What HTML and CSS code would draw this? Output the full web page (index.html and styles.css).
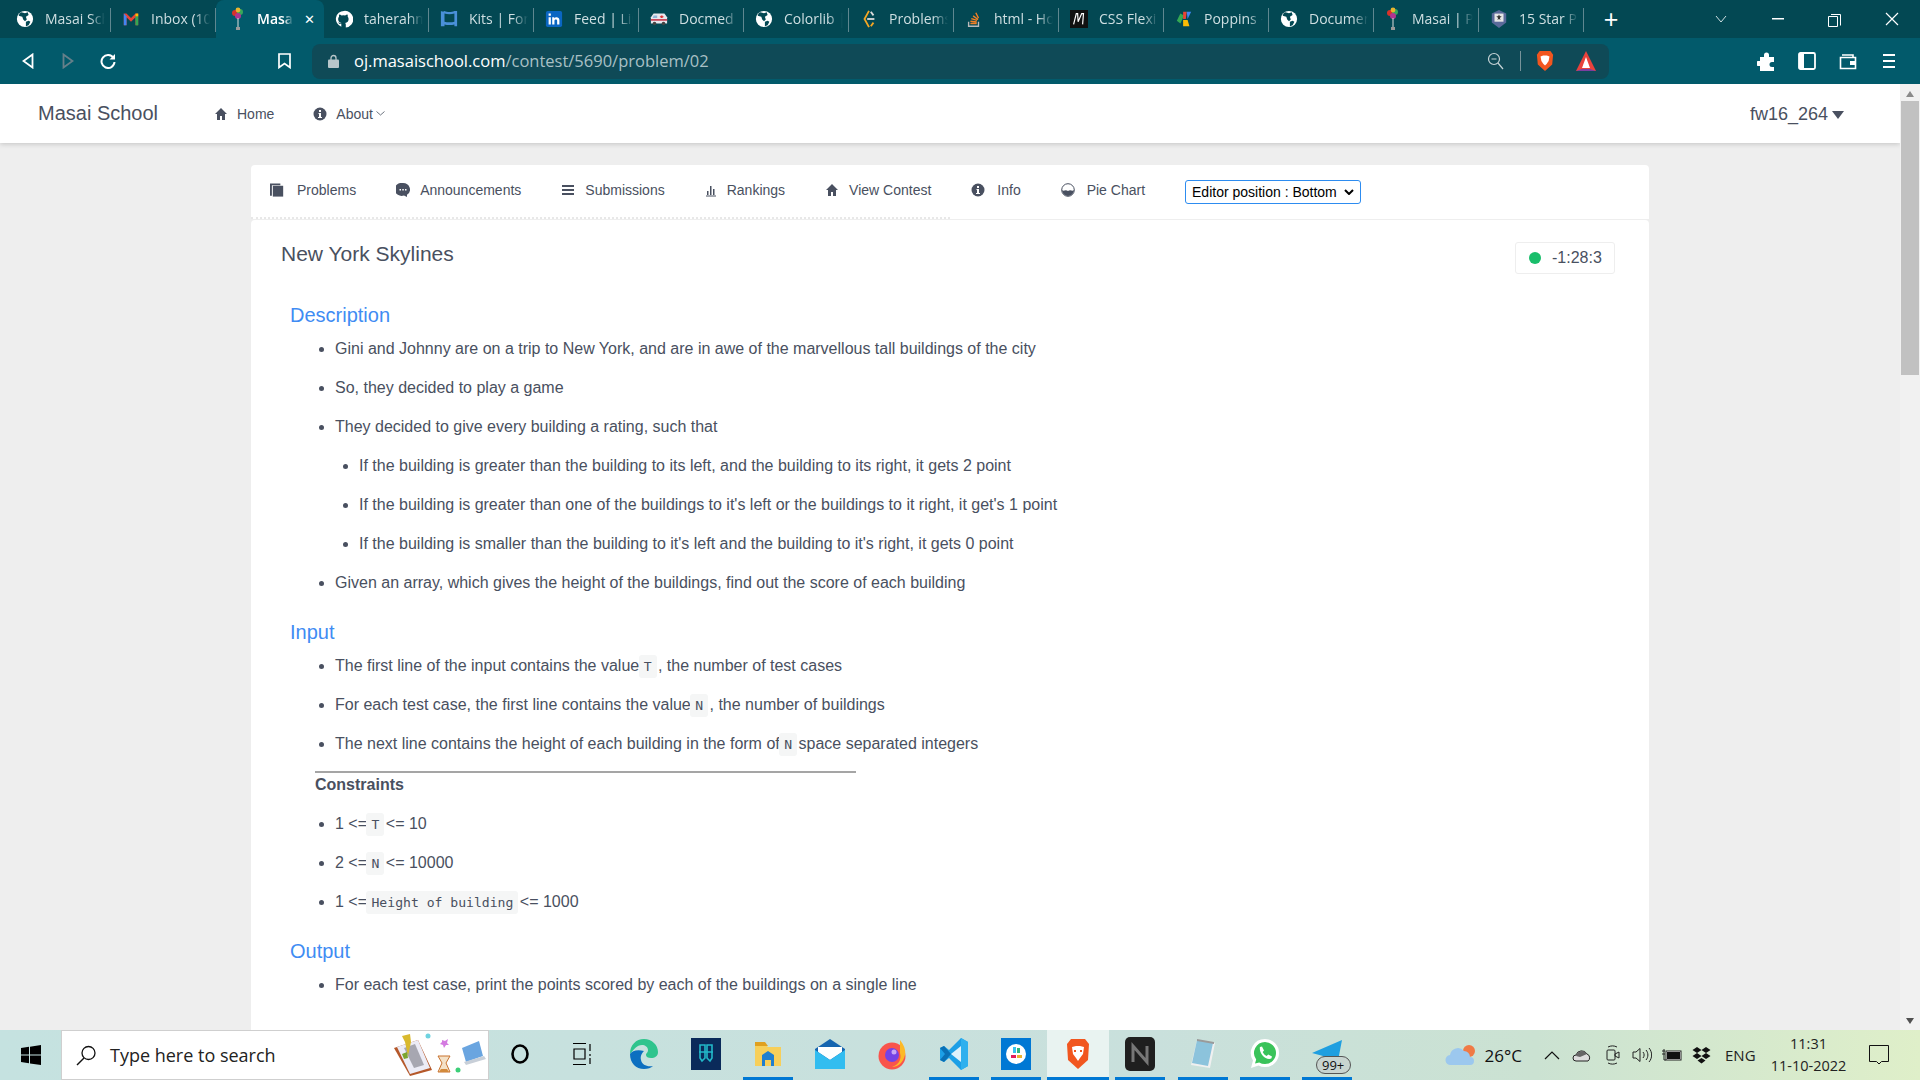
FILE: index.html
```html
<!DOCTYPE html>
<html lang="en">
<head>
<meta charset="utf-8">
<title>New York Skylines</title>
<link rel="stylesheet" href="styles.css">
</head>
<body>
<svg class="defs" width="0" height="0">
  <symbol id="globe" viewBox="0 0 20 20"><circle cx="10" cy="10" r="9" fill="#fff"/><path d="M6 2.500l4 1 3-1 1 3-3 2 1 3-2 2-2-2-1-3-4-1 1-3zM11 13l3-1 2 1-2 4-3 1z" fill="#034853"/></symbol>
  <symbol id="balloon" viewBox="0 0 16 24"><circle cx="5" cy="6" r="3" fill="#d8322a"/><circle cx="10" cy="5" r="3" fill="#37a85a"/><circle cx="8" cy="3" r="2.400" fill="#e9b52e"/><circle cx="8" cy="9" r="3" fill="#b03590"/><path d="M7.500 11h1v9h-1z" fill="#ddd"/><rect x="6" y="20" width="4" height="3" fill="#999"/></symbol>
  <symbol id="home" viewBox="0 0 14 14"><path d="M7 1L1 7h2v6h3V9h2v4h3V7h2z" fill="#495060"/></symbol>
  <symbol id="info" viewBox="0 0 14 14"><circle cx="7" cy="7" r="6.500" fill="#495060"/><path d="M6 3h2v2H6zM5.500 6H8v4h1v1H5v-1h1V7h-.5z" fill="#fff"/></symbol>
</svg>

<header class="chrome">
  <div class="tabstrip">
    <div class="tab first"><svg class="fav"><use href="#globe"/></svg><span class="tname">Masai School</span></div>
    <div class="tab"><svg class="fav" viewBox="0 0 20 20"><path d="M2 4h3l5 5 5-5h3v13h-3V8l-5 5-5-5v9H2z" fill="#ea4335"/><path d="M2 4v13h3V7z" fill="#4285f4"/><path d="M15 7v10h3V4z" fill="#34a853"/><path d="M15 4h3v3h-3z" fill="#fbbc04"/></svg><span class="tname">Inbox (10)</span></div>
    <div class="tab active"><svg class="fav tall"><use href="#balloon"/></svg><span class="tname short">Masai</span><span class="tclose">✕</span></div>
    <div class="tab"><svg class="fav" viewBox="0 0 20 20"><path d="M10 1a9 9 0 0 0-3 17.500v-3c-2 .4-3-.8-3.300-2 1 0 1.500 1 2.300 1.300.6.200 1 0 1.300-.4-2.500-.4-3.800-1.800-3.800-4.400 0-1 .3-1.900 1-2.600-.2-.8-.1-1.700.2-2.400 1 0 1.800.5 2.600 1a8 8 0 0 1 4 0c.8-.5 1.600-1 2.600-1 .3.700.4 1.600.2 2.400.7.700 1 1.600 1 2.600 0 2.600-1.300 4-3.800 4.400.5.500.7 1 .7 1.800v3.300A9 9 0 0 0 10 1z" fill="#fff"/></svg><span class="tname">taherahmed</span></div>
    <div class="tab"><svg class="fav" viewBox="0 0 20 20"><path d="M1 1c2 1 3 1 4 0 3 1.500 8 1.500 11 0l3 0v17h-3v-2c-3 1-8 1-11 0v2H1zM5 4v9c3 .8 8 .8 11 0V4c-3 .8-8 .8-11 0z" fill="#4a90d9"/></svg><span class="tname">Kits | Font</span></div>
    <div class="tab"><svg class="fav" viewBox="0 0 20 20"><rect x="1" y="1" width="18" height="18" rx="2" fill="#0a66c2"/><path d="M4 8h2.500v8H4zM4 4h2.500v2.500H4zM8 8h2.400v1.200c1-1.800 5.600-2 5.600 2V16h-2.500v-4c0-2-3-2-3 0v4H8z" fill="#fff"/></svg><span class="tname">Feed | Link</span></div>
    <div class="tab"><svg class="fav" viewBox="0 0 20 20"><path d="M1 15V8l3-4h12l3 4v7z" fill="#e8e8ee"/><path d="M1 10h18v2H1z" fill="#c9485b"/><path d="M4 6h4v3H3z" fill="#8fb6d8"/><path d="M12 6h2v1h1v1h-1v1h-2V8h-1V7h1z" fill="#d33"/><circle cx="5" cy="15" r="2" fill="#444"/><circle cx="15" cy="15" r="2" fill="#444"/></svg><span class="tname">Docmed</span></div>
    <div class="tab"><svg class="fav"><use href="#globe"/></svg><span class="tname">Colorlib |</span></div>
    <div class="tab"><svg class="fav" viewBox="0 0 20 20"><path d="M10 1L5 10l5 9" fill="none" stroke="#f5a623" stroke-width="2"/><path d="M12 2l3 4" stroke="#ddd" stroke-width="2"/><path d="M8 10h8" stroke="#ddd" stroke-width="2"/><path d="M12 18l3-4" stroke="#f5a623" stroke-width="2"/></svg><span class="tname">Problems</span></div>
    <div class="tab"><svg class="fav" viewBox="0 0 20 20"><path d="M4 13v5h11v-5" fill="none" stroke="#bbb" stroke-width="1.500"/><path d="M6 15h7M6 12.500l7 .8M7 9.500l6.500 2M9 6.500l5.500 4M12 3l3 6" stroke="#f48024" stroke-width="1.500"/></svg><span class="tname">html - How</span></div>
    <div class="tab"><svg class="fav" viewBox="0 0 20 20"><rect width="20" height="20" fill="#111"/><path d="M4 16L7 4h1.500l.5 9 4-9H15l-1 12" fill="none" stroke="#fff" stroke-width="1.300"/></svg><span class="tname">CSS Flexi</span></div>
    <div class="tab"><svg class="fav" viewBox="0 0 20 20"><path d="M2 12l4-8 4 2-4 9z" fill="#34a853"/><path d="M9 2h4l-1 8H9z" fill="#ea4335"/><path d="M13 2h5l-4 8z" fill="#4285f4"/><path d="M9 11h5l2 7H9z" fill="#fbbc04"/></svg><span class="tname">Poppins -</span></div>
    <div class="tab"><svg class="fav"><use href="#globe"/></svg><span class="tname">Document</span></div>
    <div class="tab"><svg class="fav tall"><use href="#balloon"/></svg><span class="tname">Masai | P</span></div>
    <div class="tab"><svg class="fav" viewBox="0 0 20 20"><path d="M10 0l8 4v10l-8 6-8-6V4z" fill="#5a6a9a"/><rect x="5" y="4" width="10" height="9" fill="#e6e6e6"/><path d="M10 5l1 2h2l-2 2 .7 2L10 10l-1.700 1 .7-2-2-2h2z" fill="#333"/></svg><span class="tname">15 Star P</span></div>
    <div class="newtab">+</div>
    <div class="winctl">
      <div class="wbtn"><svg width="12" height="8" viewBox="0 0 12 8"><path d="M1 1l5 6 5-6" fill="none" stroke="#cfe0e2"/></svg></div>
      <div class="wbtn"><svg width="12" height="2"><rect width="12" height="1.500" fill="#fff"/></svg></div>
      <div class="wbtn"><svg width="13" height="15" viewBox="0 0 13 15"><path d="M3 2.500h9.500v11M.5 4.500h9v10h-9z" fill="none" stroke="#fff"/></svg></div>
      <div class="wbtn"><svg width="14" height="14" viewBox="0 0 14 14"><path d="M1 1l12 12M13 1L1 13" stroke="#fff" stroke-width="1.200"/></svg></div>
    </div>
  </div>
  <div class="toolbar">
    <div class="tbtn"><svg width="12" height="16" viewBox="0 0 12 16"><path d="M10.500 1.500v13L1.500 8z" fill="none" stroke="#fff" stroke-width="1.800"/></svg></div>
    <div class="tbtn"><svg width="12" height="16" viewBox="0 0 12 16"><path d="M1.500 1.500v13l9-6.500z" fill="none" stroke="#66808a" stroke-width="1.800"/></svg></div>
    <div class="tbtn"><svg width="16" height="16" viewBox="0 0 16 16"><path d="M13.500 5A6.500 6.500 0 1 0 14.500 9" fill="none" stroke="#fff" stroke-width="2"/><path d="M15 1v5.500H9.500z" fill="#fff"/></svg></div>
    <div class="tbtn bookmark"><svg width="13" height="16" viewBox="0 0 13 16"><path d="M1 1h11v13.500L6.500 10.500 1 14.500z" fill="none" stroke="#fff" stroke-width="1.700"/></svg></div>
    <div class="omnibox">
      <svg class="lock" width="11" height="14" viewBox="0 0 11 14"><path d="M3 6V4a2.500 2.500 0 0 1 5 0v2" fill="none" stroke="#b8c6ca" stroke-width="1.300"/><rect y="5.500" width="11" height="8.500" rx="1" fill="#b8c6ca"/></svg>
      <span class="url"><span class="host">oj.masaischool.com</span>/contest/5690/problem/02</span>
      <svg class="zoomout" width="17" height="18" viewBox="0 0 17 18"><circle cx="7" cy="7" r="5.500" fill="none" stroke="#c6d3d6" stroke-width="1.200"/><path d="M4.500 7h5M11 11l5 6" stroke="#c6d3d6" stroke-width="1.200"/></svg>
      <span class="osep"></span>
      <svg class="brave" width="18" height="22" viewBox="0 0 20 24"><path d="M4 1h12l3 4-1 11-8 7-8-7L1 5z" fill="#f1561f"/><path d="M5 7l3-1h4l3 1-1 5-2 3-2 2-2-2-2-3z" fill="#fff"/></svg>
      <svg class="bat" width="22" height="22" viewBox="0 0 22 22"><path d="M11 1l10 20H1z" fill="#e8423c"/><path d="M1 21l6-2h8l6 2z" fill="#7b3ea0"/><path d="M11 7l4 11H7z" fill="#fff"/></svg>
    </div>
    <div class="tbtn ext"><svg width="19" height="19" viewBox="0 0 19 19"><path d="M7 3a2.500 2.500 0 0 1 5 0v2h5v5h-2a2.500 2.500 0 0 0 0 5h2v4H3v-5H1a2.500 2.500 0 0 1 0-5h2V5h4z" fill="#fff"/></svg></div>
    <div class="tbtn"><svg width="18" height="18" viewBox="0 0 18 18"><rect x="1" y="1" width="16" height="16" rx="1.500" fill="none" stroke="#fff" stroke-width="1.800"/><rect x="1" y="1" width="5" height="16" fill="#fff"/></svg></div>
    <div class="tbtn"><svg width="18" height="18" viewBox="0 0 18 18"><path d="M3 3h11v3M1.500 5.500h15v11h-15z" fill="none" stroke="#fff" stroke-width="1.600"/><rect x="11" y="9" width="5" height="4" fill="#fff"/></svg></div>
    <div class="tbtn"><svg width="12" height="14" viewBox="0 0 12 14"><path d="M0 1h12M0 7h12M0 13h12" stroke="#fff" stroke-width="2"/></svg></div>
  </div>
</header>

<div class="viewport">
  <div class="page">
    <nav class="sitenav">
      <span class="brand">Masai School</span>
      <span class="navitem"><svg class="nicon"><use href="#home"/></svg>Home</span>
      <span class="navitem about"><svg class="nicon"><use href="#info"/></svg>About<svg class="chev" width="9" height="5" viewBox="0 0 9 5"><path d="M.5.500L4.500 4 8.500.5" fill="none" stroke="#495060" stroke-width=".8"/></svg></span>
      <span class="user">fw16_264<svg class="caret" width="12" height="8" viewBox="0 0 12 8"><path d="M0 0h12L6 8z" fill="#495060"/></svg></span>
    </nav>

    <main class="content">
      <section class="menucard">
        <span class="mitem"><svg class="micon wide" viewBox="0 0 17 14"><path d="M0 0h11v2H2v11H0z" fill="#495060"/><rect x="3" y="2.500" width="11" height="11.500" fill="#495060"/></svg>Problems</span>
        <span class="mitem"><svg class="micon" viewBox="0 0 14 14"><path d="M7 0a7 6.500 0 0 1 4 11.800V14l-3-1.500A7 6.500 0 1 1 7 0z" fill="#495060"/><path d="M3.500 6h1.500v1.500H3.500zM6.300 6h1.500v1.500H6.300zM9 6h1.500v1.500H9z" fill="#fff"/></svg>Announcements</span>
        <span class="mitem"><svg class="micon" viewBox="0 0 14 14"><path d="M1 2h12v2H1zM1 6h12v2H1zM1 10h12v2H1z" fill="#495060"/></svg>Submissions</span>
        <span class="mitem"><svg class="micon narrow" viewBox="0 0 12 14"><path d="M2 8h1.500v4H2zM5 3h1.500v9H5zM8 6h1.500v6H8zM1 12.500h10v1H1z" fill="#495060"/></svg>Rankings</span>
        <span class="mitem"><svg class="micon"><use href="#home"/></svg>View Contest</span>
        <span class="mitem"><svg class="micon wide3"><use href="#info"/></svg>Info</span>
        <span class="mitem"><svg class="micon wide2" viewBox="0 0 14 14"><circle cx="7" cy="7" r="6.300" fill="#fff" stroke="#495060"/><path d="M1 7c2 2 3-1 6 1 3-2 4 1 6-1a6 6 0 0 1-12 0z" fill="#495060"/></svg>Pie Chart</span>
        <select class="editorpos"><option>Editor position : Bottom</option></select>
      </section>

      <section class="problem">
        <div class="phead">
          <h1 class="ptitle">New York Skylines</h1>
          <div class="timer"><span class="dot"></span>-1:28:3</div>
        </div>
        <div class="pbody">
          <h2 class="sect">Description</h2>
          <ul class="list">
            <li>Gini and Johnny are on a trip to New York, and are in awe of the marvellous tall buildings of the city</li>
            <li>So, they decided to play a game</li>
            <li>They decided to give every building a rating, such that
              <ul class="list sub">
                <li>If the building is greater than the building to its left, and the building to its right, it gets 2 point</li>
                <li>If the building is greater than one of the buildings to it's left or the buildings to it right, it get's 1 point</li>
                <li>If the building is smaller than the building to it's left and the building to it's right, it gets 0 point</li>
              </ul>
            </li>
            <li>Given an array, which gives the height of the buildings, find out the score of each building</li>
          </ul>
          <h2 class="sect">Input</h2>
          <ul class="list">
            <li>The first line of the input contains the value <code>T</code> , the number of test cases</li>
            <li>For each test case, the first line contains the value <code>N</code> , the number of buildings</li>
            <li>The next line contains the height of each building in the form of <code>N</code> space separated integers</li>
          </ul>
          <hr class="rule">
          <p class="constraints">Constraints</p>
          <ul class="list">
            <li>1 &lt;= <code>T</code> &lt;= 10</li>
            <li>2 &lt;= <code>N</code> &lt;= 10000</li>
            <li>1 &lt;= <code>Height of building</code> &lt;= 1000</li>
          </ul>
          <h2 class="sect">Output</h2>
          <ul class="list">
            <li>For each test case, print the points scored by each of the buildings on a single line</li>
          </ul>
        </div>
      </section>
    </main>
  </div>
  <div class="scrollbar">
    <span class="arrow up"></span>
    <span class="thumb"></span>
    <span class="arrow down"></span>
  </div>
</div>

<footer class="taskbar">
  <div class="start"><svg width="20" height="20" viewBox="0 0 20 20"><path d="M0 3l8-1.200V9.500H0zM9 1.700L20 0v9.500H9zM0 10.500h8v7.800L0 17zM9 10.500h11V20L9 18.400z" fill="#000"/></svg></div>
  <div class="search">
    <svg width="21" height="21" viewBox="0 0 21 21"><circle cx="12.500" cy="8" r="6.500" fill="none" stroke="#111" stroke-width="1.300"/><path d="M8 13L1 20" stroke="#111" stroke-width="1.400"/></svg>
    <span class="stext">Type here to search</span>
    <svg class="sart" width="95" height="46" viewBox="0 0 95 46"><path d="M2 16l24-8 14 30-22 6z" fill="#b5582a"/><path d="M5 15l21-7 12 28-20 6z" fill="#ececf6"/><path d="M12 16l11-4 9 21-10 3z" fill="#8a8a94" opacity=".7"/><path d="M10 4l8-2 1 8-3 14-3-14z" fill="#d9b92d"/><path d="M10 22l5-2 1 6-4 1z" fill="#7ba52e"/><path d="M46 24h12l-4 7 4 9H46l4-9z" fill="#f4e2c8" stroke="#c9722e"/><path d="M49 37h6l2 3H47z" fill="#d38a3c"/><path d="M70 16l17-7 4 15-17 6z" fill="#6aa5e0"/><path d="M72 30l20-6 2 3-20 6z" fill="#c8cfd8"/><circle cx="36" cy="4" r="2.500" fill="#6fd3e0"/><path d="M50 8l3 1 3-2-1 4 2 2-3 0-2 3-1-3-3-1 2-2z" fill="#d47be0"/><circle cx="66" cy="38" r="2.500" fill="#3ccf78"/></svg>
  </div>
  <div class="apps">
    <div class="app"><svg width="18" height="20" viewBox="0 0 18 20"><ellipse cx="9" cy="10" rx="7.500" ry="8.500" fill="none" stroke="#000" stroke-width="2.600"/></svg></div>
    <div class="app"><svg width="19" height="22" viewBox="0 0 19 22"><path d="M0 .5h13M0 21.500h13M1 6h11v10H1zM17 1v7M17 11v2M17 15v6" fill="none" stroke="#000" stroke-width="1.200"/></svg></div>
    <div class="app"><svg width="32" height="32" viewBox="0 0 32 32"><path d="M2 16C2 7 8 1 16 1c8 0 14 6 14 13 0 4-3 6-7 6-3 0-5-1-5-3 0-2 2-2 2-5 0-3-3-5-6-5-5 0-9 5-12 9z" fill="#2fc48d"/><path d="M2 16c0 9 6 15 14 15 4 0 7-1 9-3-6 1-11-1-12-6-1-4 1-7 3-9-7-2-12 0-14 3z" fill="#0c6fc0"/></svg></div>
    <div class="app"><svg width="30" height="32" viewBox="0 0 30 32"><rect width="30" height="32" fill="#0a2a5a"/><path d="M9 7h5v13l-3 3-2-3zM16 7h5v13l-2 3-3-3zM8 14h14" fill="none" stroke="#22b8c9" stroke-width="1.600"/></svg></div>
    <div class="app on"><svg width="28" height="26" viewBox="0 0 28 26"><path d="M1 3h10l3 3h13v19H1z" fill="#f7cf5a"/><path d="M1 1h10l3 4H1z" fill="#e0a020"/><path d="M8 14l6-4 6 4v11h-3v-6h-6v6H8z" fill="#1f7fd0"/></svg></div>
    <div class="app"><svg width="30" height="32" viewBox="0 0 30 32"><path d="M0 11L15 1l15 10v20H0z" fill="#1565b0"/><path d="M3 9h24v5l-12 8-12-8z" fill="#fff"/><path d="M0 12l15 10 15-10v19H0z" fill="#32bdf0"/></svg></div>
    <div class="app"><svg width="28" height="32" viewBox="0 0 28 32"><circle cx="14" cy="18" r="13.500" fill="#f9544c"/><path d="M22 2c4 5 6 10 5 15-2 8-7 12-13 12 6-2 10-7 8-14z" fill="#fdb927"/><circle cx="14" cy="17" r="7" fill="#7542e5"/><circle cx="16" cy="14" r="2.500" fill="#c9a6f5"/></svg></div>
    <div class="app on"><svg width="30" height="34" viewBox="0 0 30 34"><path d="M22 1l7 4v24l-7 4L10 21l-5 4-4-2 0-12 4-2 5 4z" fill="#1c9fe6"/><path d="M22 9v16L12 17z" fill="#fff" opacity=".85"/><path d="M1 11l4-2 7 8-7 8-4-2 5-6z" fill="#0a70b5"/><path d="M22 1l7 4v24l-7 4z" fill="#2fb0ee"/></svg></div>
    <div class="app on"><svg width="30" height="32" viewBox="0 0 30 32"><rect width="30" height="32" fill="#0078d4"/><circle cx="15" cy="16" r="10" fill="#fff"/><path d="M12 9h3v6h-3z" fill="#36c5f0"/><path d="M16 10h3v5h-3z" fill="#2eb67d"/><path d="M10 17h5v3h-5z" fill="#e01e5a"/><path d="M16 17h5v3h-5z" fill="#ecb22e"/></svg></div>
    <div class="app on cur"><svg width="26" height="32" viewBox="0 0 26 32"><path d="M6 1h14l4 5-1 16-10 9-10-9L2 6z" fill="#f1561f"/><path d="M7 9l4-1h4l4 1-1 7-3 4-2 3-2-3-3-4z" fill="#fff"/><path d="M9 12h2v2H9zM15 12h2v2h-2z" fill="#f1561f"/></svg></div>
    <div class="app on"><svg width="30" height="34" viewBox="0 0 30 34"><rect width="30" height="34" rx="5" fill="#1f1f1f"/><path d="M8 25V9l14 16V9" fill="none" stroke="#777" stroke-width="3"/></svg></div>
    <div class="app on"><svg width="26" height="32" viewBox="0 0 26 32"><path d="M7 2l18 3-5 25-19-3z" fill="#f0f0f0"/><path d="M7 2l16 3-5 23L2 25z" fill="#8cc3dc"/><path d="M7 1l17 3v2L7 3z" fill="#9a9a9a"/></svg></div>
    <div class="app on"><svg width="30" height="32" viewBox="0 0 30 32"><path d="M15 1a14 14 0 0 1 0 28 14 14 0 0 1-6.500-1.500L1 30l2-7.500A14 14 0 0 1 15 1z" fill="#fff"/><path d="M15 4a11 11 0 0 1 0 22 11 11 0 0 1-5.800-1.600L5 25.500l1.200-4A11 11 0 0 1 15 4z" fill="#3ac35a"/><path d="M10 9l2-.5 2 4-1.300 1.500c1 2 2 3 4 4l1.500-1.500 3.800 2-.7 2c-5 2-12-4-11.500-11z" fill="#fff"/></svg></div>
    <div class="app on tg">
      <svg width="32" height="30" viewBox="0 0 32 30"><path d="M1 14L31 1l-5 26-9-7-4 4-1-7z" fill="#1f9fe0"/></svg>
      <span class="badge">99+</span>
    </div>
  </div>
  <div class="tray">
    <svg class="cloud" width="31" height="22" viewBox="0 0 31 22"><circle cx="24" cy="7" r="6" fill="#f07a45"/><path d="M6 21a5 5 0 0 1-1-10 8 8 0 0 1 14-4 6 6 0 0 1 6 6 4 4 0 0 1 0 8z" fill="#9cc8ee"/></svg>
    <span class="temp">26°C</span>
    <svg class="t-chev" width="16" height="9" viewBox="0 0 16 9"><path d="M1 8l7-7 7 7" fill="none" stroke="#111" stroke-width="1.200"/></svg>
    <svg class="t-i" width="20" height="13" viewBox="0 0 20 13"><path d="M4 12a3 3 0 0 1 0-6 6 6 0 0 1 11-1 4 4 0 0 1 1 7z" fill="#ddd" stroke="#222"/><path d="M4 7a6 6 0 0 1 11-2l-7 3z" fill="#666"/></svg>
    <svg class="t-i t-wide" width="14" height="20" viewBox="0 0 14 20"><rect x="1" y="5" width="8" height="10" rx="1" fill="none" stroke="#222"/><path d="M9 9l4-2v6l-4-2zM2 2c3-1.500 6-1.500 9 0M2 18c3 1.500 6 1.500 9 0" fill="none" stroke="#222"/></svg>
    <svg class="t-i" width="20" height="16" viewBox="0 0 20 16"><path d="M1 5h3l4-3.500v13L4 11H1z" fill="none" stroke="#222"/><path d="M11 5c1.500 2 1.500 4 0 6M14 3c2.500 3 2.500 7 0 10M17 1c3.500 4 3.500 10 0 14" fill="none" stroke="#222"/></svg>
    <svg class="t-i t-near" width="20" height="12" viewBox="0 0 20 12"><path d="M0 2h3M0 5h3M2 0v7M2 7v4h2" fill="none" stroke="#222"/><rect x="4" y="2" width="15" height="9" fill="#fff" stroke="#222"/><rect x="5" y="3" width="13" height="7" fill="#111"/></svg>
    <svg class="t-i t-near" width="19" height="17" viewBox="0 0 19 17"><path d="M5 0l4.500 3L5 6 .5 3zM14 0l4.500 3L14 6 9.500 3zM5 6l4.500 3L5 12 .5 9zM14 6l4.500 3L14 12 9.500 9zM9.500 11l4 2.500-4 3-4-3z" fill="#111"/></svg>
    <span class="lang">ENG</span>
    <div class="clock"><span>11:31</span><span>11-10-2022</span></div>
    <svg class="notif" width="20" height="20" viewBox="0 0 20 20"><path d="M.5.5h19v16h-7l-2.500 2.500L7.500 16.500h-7z" fill="none" stroke="#111"/></svg>
  </div>
</footer>
</body>
</html>
```
FILE: styles.css
```css
* { box-sizing: border-box; }
html, body { height: 100%; }
body {
  margin: 0;
  display: flex;
  flex-direction: column;
  height: 100vh;
  overflow: hidden;
  font-family: "Liberation Sans", Arial, sans-serif;
  color: #495060;
  background: #eee;
}
.defs { position: absolute; }

/* browser chrome */
.chrome { flex: none; }
.tabstrip {
  height: 38px;
  background: #034853;
  display: flex;
  align-items: stretch;
  padding-left: 6px;
  font-family: "Open Sans", sans-serif;
  font-size: 14px;
  color: #cfdfe2;
}
.tab {
  width: 105px;
  flex: none;
  display: flex;
  align-items: center;
  padding: 0 6px 0 11px;
  position: relative;
  overflow: hidden;
  white-space: nowrap;
}
.tab::after {
  content: "";
  position: absolute;
  right: 0;
  top: 8px;
  bottom: 6px;
  width: 1px;
  background: #5f8790;
}
.tab.first { padding-left: 10px; }
.tab.active {
  width: 108px;
  background: #025a6b;
  border-radius: 8px 8px 0 0;
  color: #fff;
  font-weight: 600;
  padding-left: 14px;
}
.tab.active::after { display: none; }
.fav { width: 18px; height: 18px; flex: none; margin-right: 11px; }
.fav.tall { width: 16px; height: 24px; margin-right: 11px; }
.tname {
  flex: 1;
  min-width: 0;
  overflow: hidden;
  padding-bottom: 2px;
  -webkit-mask-image: linear-gradient(to right, #000 75%, transparent);
  mask-image: linear-gradient(to right, #000 75%, transparent);
}
.tname.short { flex: 0 0 36px; }
.tclose { font-size: 13px; margin-left: 11px; font-weight: 400; }
.newtab {
  width: 54px;
  text-align: center;
  color: #fff;
  font-size: 25px;
  line-height: 38px;
  font-family: "Liberation Sans", sans-serif;
}
.winctl { margin-left: auto; display: flex; }
.wbtn { width: 57px; display: flex; align-items: center; justify-content: center; }

.toolbar {
  height: 46px;
  background: #025a6b;
  display: flex;
  align-items: center;
  padding-left: 8px;
}
.tbtn { width: 40px; flex: none; display: flex; justify-content: center; align-items: center; }
.tbtn.bookmark { margin-left: 136px; }
.tbtn.ext { margin-left: 137px; }
.tbtn.ext ~ .tbtn { width: 41px; }
.omnibox {
  margin-left: 8px;
  width: 1297px;
  height: 35px;
  background: #0f4a57;
  border-radius: 8px;
  display: flex;
  align-items: center;
  padding: 0 12px 0 16px;
}
.url {
  margin-left: 15px;
  flex: 1;
  padding-bottom: 2px;
  font-family: "Open Sans", sans-serif;
  font-size: 16.5px;
  color: #a9c0c5;
}
.host { color: #fff; }
.osep { width: 1px; height: 20px; background: #78939a; margin: 0 15px 0 16px; }
.bat { margin-left: 21px; }

/* page */
.viewport { flex: 1; min-height: 0; display: flex; }
.page { flex: 1; min-width: 0; overflow: hidden; display: flex; flex-direction: column; }
.sitenav {
  flex: none;
  height: 59px;
  background: #fff;
  box-shadow: 0 1px 5px rgba(0,0,0,.18);
  display: flex;
  align-items: center;
  padding-left: 38px;
  font-size: 14px;
  position: relative;
}
.brand { font-size: 20px; margin-right: 56px; width: 120px; white-space: nowrap; }
.navitem { display: flex; align-items: center; }
.nicon { width: 14px; height: 14px; margin-right: 9px; }
.navitem.about { margin-left: 39px; }
.chev { margin-left: 3px; }
.user { margin-left: auto; margin-right: 56px; padding-top: 2px; font-size: 18px; display: flex; align-items: center; }
.caret { margin-left: 4px; }

.content { flex: 1; min-height: 0; padding: 22px 251px 0; width: 1900px; }
.menucard {
  height: 54px;
  background: #fff;
  border-radius: 4px 4px 0 0;
  display: flex;
  align-items: center;
  padding-left: 19px;
  gap: 40px;
  font-size: 14px;
  position: relative;
}
.menucard::after {
  content: "";
  position: absolute;
  left: 0;
  bottom: 0;
  width: 699px;
  border-bottom: 2px dotted #e8e8e8;
}
.mitem { display: flex; align-items: center; white-space: nowrap; position: relative; top: -2px; }
.micon { width: 14px; height: 14px; margin-right: 10px; flex: none; }
.micon.narrow { width: 12px; }
.micon.wide { width: 16px; margin-right: 11px; }
.micon.wide2 { margin-right: 12px; }
.micon.wide3 { margin-right: 12px; }
.editorpos {
  height: 24px;
  width: 176px;
  font-family: "Liberation Sans", sans-serif;
  font-size: 14px;
  color: #000;
  background: #fff url("data:image/svg+xml,%3Csvg xmlns='http://www.w3.org/2000/svg' width='10' height='6'%3E%3Cpath d='M1 1l4 4 4-4' fill='none' stroke='%23000' stroke-width='2'/%3E%3C/svg%3E") no-repeat right 6px center;
  border: 1px solid #2d8cf0;
  border-radius: 3px;
  padding: 0 0 0 6px;
  outline: none;
  appearance: none;
  -webkit-appearance: none;
}
.problem {
  margin-top: 1px;
  background: #fff;
  border-radius: 4px 4px 0 0;
  height: 900px;
}
.phead {
  display: flex;
  justify-content: space-between;
  align-items: flex-start;
  padding: 21px 34px 0 30px;
}
.ptitle { margin: 1px 0 0; font-size: 21px; line-height: 24px; font-weight: 400; }
.timer {
  width: 100px;
  height: 32px;
  margin-top: 1px;
  border: 1px solid #eee;
  border-radius: 3px;
  display: flex;
  align-items: center;
  padding-left: 13px;
  font-size: 16px;
}
.dot { width: 12px; height: 12px; border-radius: 50%; background: #19be6b; margin-right: 11px; flex: none; }
.pbody { padding: 26px 0 0 39px; font-size: 16px; line-height: 24px; }
.sect { margin: 22px 0 7px; font-size: 20px; line-height: 30px; font-weight: 400; color: #3f8cf3; }
.sect:first-child { margin-top: 0; }
.list { margin: 0; padding: 0 0 0 45px; list-style: disc; }
.list li { margin-bottom: 15px; }
.sub { padding-left: 24px; margin-top: 15px; }
.sub li:last-child { margin-bottom: 0; }
code {
  font-family: "DejaVu Sans Mono", monospace;
  font-size: 13.1px;
  line-height: 1;
  background: #f5f6f6;
  border-radius: 3px;
  padding: 4px 5px;
  margin: 0 -3px 0 -5px;
}
.rule {
  margin: 0 0 0 25px;
  width: 541px;
  height: 2px;
  border: 0;
  background: #a5a5a5;
}
.constraints { margin: 0 0 15px 25px; font-weight: 700; }

.scrollbar { width: 20px; flex: none; background: #f1f1f1; display: flex; flex-direction: column; align-items: center; }
.thumb { display: block; width: 18px; height: 274px; background: #c1c1c1; margin-top: 4px; }
.arrow { width: 0; height: 0; border-left: 4px solid transparent; border-right: 4px solid transparent; margin-top: 7px; }
.arrow.up { border-bottom: 6px solid #8a8a8a; }
.arrow.down { border-top: 6px solid #505050; margin-top: auto; margin-bottom: 6px; }

/* taskbar */
.taskbar {
  flex: none;
  height: 50px;
  display: flex;
  align-items: stretch;
  background: linear-gradient(to right, #c5e2e0, #c9e0dc 60%, #cbe2d2 80%, #dfefc9);
  font-family: "Open Sans", sans-serif;
  color: #111;
}
.start { width: 61px; display: flex; align-items: center; justify-content: center; }
.search {
  width: 428px;
  background: #fff;
  border: 1px solid #cfcfcf;
  display: flex;
  align-items: center;
  padding-left: 14px;
}
.stext { margin-left: 13px; font-size: 18px; flex: 1; color: #222; white-space: nowrap; }
.sart { margin-right: 1px; }
.apps { display: flex; }
.app {
  width: 62.05px;
  display: flex;
  align-items: center;
  justify-content: center;
  position: relative;
  padding-bottom: 2px;
}
.app.on {
  background: linear-gradient(#0078d4, #0078d4) center bottom / 50px 3px no-repeat;
}
.app.cur {
  background: linear-gradient(#0078d4, #0078d4) center bottom / 100% 3px no-repeat, rgba(255,255,255,.6);
}
.badge {
  position: absolute;
  left: 20px;
  top: 26px;
  height: 18px;
  width: 35px;
  border: 1px solid #555;
  border-radius: 9px;
  background: #c8d4d0;
  font-size: 13px;
  line-height: 16px;
  text-align: center;
  color: #111;
}
.tray { margin-left: auto; display: flex; align-items: center; }
.temp { font-size: 17px; margin-left: 9px; margin-right: 22px; }
.t-i { margin-left: 12px; }
.t-i.t-wide { margin-left: 14px; }
.t-i.t-near { margin-left: 10px; }
.lang { margin-left: 14px; font-size: 15px; width: 29px; color: #222; white-space: nowrap; }
.clock { width: 109px; display: flex; flex-direction: column; align-items: center; font-size: 14.5px; line-height: 22px; color: #222; white-space: nowrap; }
.notif { margin: 0 31px 0 6px; }
```
